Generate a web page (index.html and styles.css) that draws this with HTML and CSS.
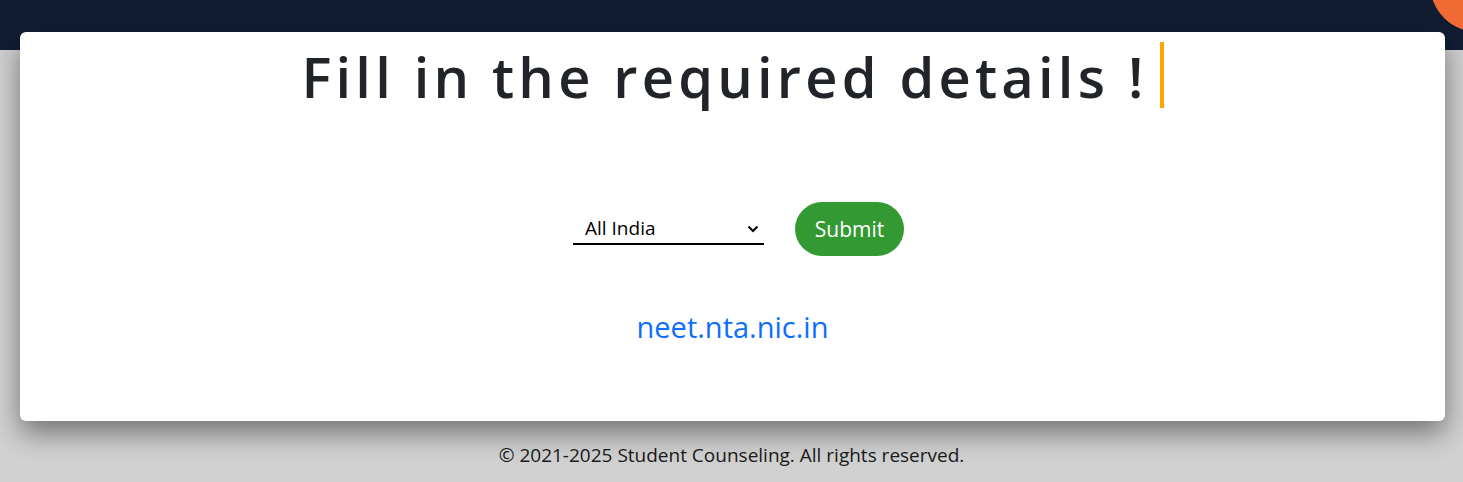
FILE: index.html
```html
<!DOCTYPE html>
<html lang="en">
<head>
<meta charset="utf-8">
<title>Student Counseling</title>
<link rel="stylesheet" href="styles.css">
</head>
<body>
<header class="topbar">
  <span class="blob"></span>
</header>
<main class="card">
  <h1 class="title"><span class="typed">Fill in the required details !</span></h1>
  <form class="form-row">
    <div class="select-wrap">
      <select class="state-select">
        <option>All India</option>
      </select>
      <svg class="chev" width="12" height="8" viewBox="0 0 12 8"><path d="M1.5 1.5 L6 6 L10.5 1.5" fill="none" stroke="#000" stroke-width="2"/></svg>
    </div>
    <button type="button" class="submit">Submit</button>
  </form>
  <a class="link" href="#">neet.nta.nic.in</a>
</main>
<footer class="foot">© 2021-2025 Student Counseling. All rights reserved.</footer>
</body>
</html>
```
FILE: styles.css
```css
* { box-sizing: border-box; }
html, body { margin: 0; height: 100%; }
body {
  background: #d1d1d1;
  font-family: "Open Sans", "Noto Sans", sans-serif;
  overflow: hidden;
}
.topbar {
  height: 50px;
  background: #111c33;
  position: relative;
  overflow: hidden;
}
.blob {
  position: absolute;
  width: 96px;
  height: 96px;
  border-radius: 50%;
  background: #f26a34;
  left: 1430px;
  top: -64px;
}
.card {
  position: relative;
  margin: -18px 18px 0 20px;
  height: 389px;
  background: #fff;
  border-radius: 6px;
  box-shadow: 0 12px 28px rgba(0,0,0,0.45);
  padding-top: 10px;
  display: flex;
  flex-direction: column;
  align-items: center;
}
.title {
  margin: 0;
  font-size: 56px;
  font-weight: 600;
  line-height: 66px;
  letter-spacing: 4.2px;
  color: #212529;
}
.typed {
  display: inline-block;
  border-right: 4px solid #ffa500;
  padding-right: 12px;
  padding-top: 2px;
  line-height: 64px;
}
.form-row {
  margin-top: 93px;
  margin-left: 12px;
  display: flex;
  align-items: center;
  gap: 31px;
}
.select-wrap { position: relative; }
.state-select {
  appearance: none;
  -webkit-appearance: none;
  width: 191px;
  height: 30px;
  border: none;
  border-bottom: 2px solid #000;
  background: transparent;
  font-family: inherit;
  font-size: 19px;
  color: #000;
  padding: 0 12px 4px;
  margin-top: 2px;
  outline: none;
}
.chev {
  position: absolute;
  right: 5px;
  top: 12px;
}
.submit {
  width: 109px;
  height: 54px;
  border: none;
  border-radius: 27px;
  background: #339933;
  color: #fff;
  font-family: inherit;
  font-size: 21px;
  padding: 0;
}
.link {
  margin-top: 51px;
  font-size: 29px;
  color: #0d6efd;
  text-decoration: none;
}
.foot {
  text-align: center;
  margin-top: 21px;
  font-size: 19px;
  color: #1a1a1a;
}
```
